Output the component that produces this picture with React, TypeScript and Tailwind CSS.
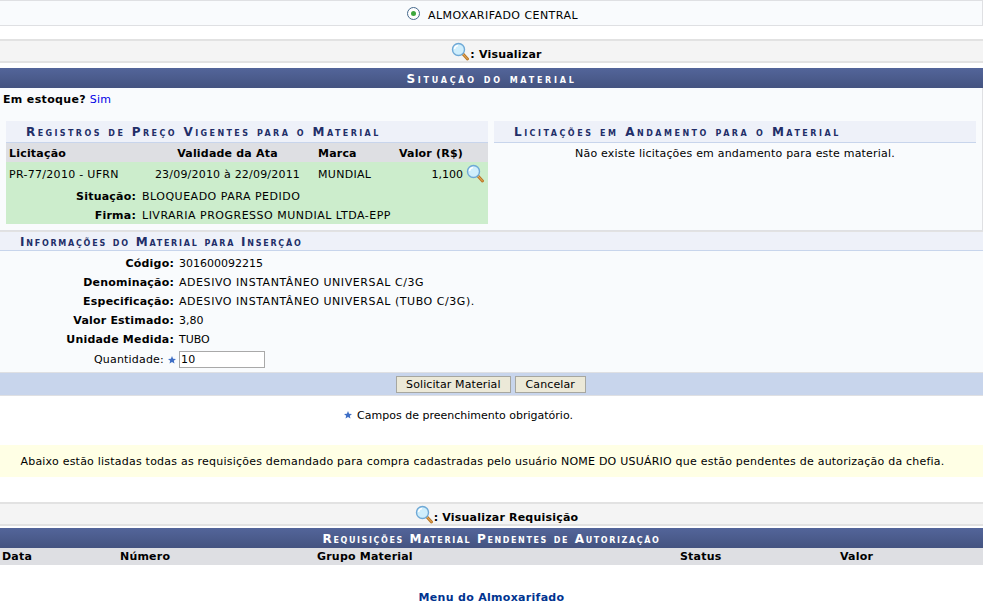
const Lens = ({ className = '' }: { className?: string }) => (
  <svg className={className} width="19" height="19" viewBox="0 0 19 19">
    <path d="M11.5 11.5l5 5.5" stroke="#b9772a" strokeWidth="3" strokeLinecap="round" />
    <path d="M11.5 11.5l5 5.5" stroke="#eeb25a" strokeWidth="1" strokeLinecap="round" />
    <circle cx="7.5" cy="7.5" r="6" fill="#cfeefc" stroke="#6fa9d6" strokeWidth="1.4" />
    <path d="M3.5 7a4 4 0 0 1 3.5-3.5" stroke="#fff" strokeWidth="1.5" fill="none" />
  </svg>
);

const Star = () => (
  <svg width="8" height="8" viewBox="0 0 10 10" className="inline-block">
    <path d="M5 0l1.4 3.3 3.6.3-2.7 2.3.8 3.6L5 7.6 1.9 9.5l.8-3.6L0 3.6l3.6-.3z" fill="#3f6fc6" />
  </svg>
);

const SectionTitle = ({ children, className = '' }: { children: string; className?: string }) => (
  <div className={`bg-[#475785] bg-gradient-to-b from-[#53659a] to-[#445380] h-5 pt-px flex items-center justify-center text-white font-bold text-[12px] [font-variant:small-caps] ${className}`}>
    {children}
  </div>
);

const SubTitle = ({ children, className = '' }: { children: string; className?: string }) => (
  <div className={`bg-[#eef1f9] border-b border-[#c8d5ec] text-[#222e68] font-bold text-[12px] [font-variant:small-caps] flex items-center ${className}`}>
    {children}
  </div>
);

const Caption = ({ children }: { children: React.ReactNode }) => (
  <div className="h-6 bg-[#f4f4f4] border-y-2 border-[#e2e2e2] flex items-end justify-center font-bold text-[11px] pl-[10px]">
    <Lens className="self-center" />
    <span className="leading-4 -mb-[2px]">{children}</span>
  </div>
);

const fields = [
  ['Código:', '301600092215', 'tracking-normal'],
  ['Denominação:', 'ADESIVO INSTANTÂNEO UNIVERSAL C/3G', 'tracking-[0.55px]'],
  ['Especificação:', 'ADESIVO INSTANTÂNEO UNIVERSAL (TUBO C/3G).', 'tracking-[0.55px]'],
  ['Valor Estimado:', '3,80', 'tracking-normal'],
  ['Unidade Medida:', 'TUBO', 'tracking-normal'],
];

export default function App() {
  return (
    <div className="w-[983px] h-[606px] bg-white text-black text-[11px] tracking-[0.2px] font-['DejaVu_Sans',Verdana,sans-serif] overflow-hidden">
      <div className="h-[26px] bg-[#f9fbfd] border-y border-r border-[#dfe0e3] flex items-center justify-center gap-2 pt-1 pl-[3px]">
        <span className="w-[13px] h-[13px] rounded-full border border-[#45698c] bg-white flex items-center justify-center mb-1">
          <span className="w-[5px] h-[5px] rounded-full bg-[#3ea83e]" />
        </span>
        <span className="tracking-[0.45px] pt-[2px]">ALMOXARIFADO CENTRAL</span>
      </div>

      <div className="mt-[13px]">
        <Caption>: Visualizar</Caption>
      </div>

      <div className="mt-[5px]">
        <SectionTitle className="tracking-[2.75px]">Situação do material</SectionTitle>
      </div>

      <div className="h-[143px] bg-[#f9fbfd] border-r border-b border-[#dfe0e3] px-[6px]">
        <div className="h-[33px] -ml-[3px] pt-[3px] leading-[18px]">
          <b className="tracking-[0.35px]">Em estoque?</b> <span className="text-[#0000e6]">Sim</span>
        </div>
        <div className="grid grid-cols-[482px_482px] gap-[6px]">
          <div>
            <SubTitle className="h-[22px] pl-5 tracking-[2.4px]">Registros de Preço Vigentes para o Material</SubTitle>
            <div className="h-[19px] bg-[#dedfe3] grid grid-cols-[141px_155px_86px_72px] items-center font-bold pl-[3px] pt-[3px]">
              <span>Licitação</span>
              <span className="text-center">Validade da Ata</span>
              <span className="pl-[13px]">Marca</span>
              <span className="text-right">Valor (R$)</span>
            </div>
            <div className="h-[62px] bg-[#ccedcc]">
              <div className="h-[23px] pt-[3px] grid grid-cols-[141px_155px_86px_72px_24px] items-center pl-[3px]">
                <span className="tracking-[0.3px]">PR-77/2010 - UFRN</span>
                <span className="text-center">23/09/2010 à 22/09/2011</span>
                <span className="pl-[13px] tracking-[0.3px]">MUNDIAL</span>
                <span className="text-right tracking-normal">1,100</span>
                <Lens className="ml-[3px] -mt-[4px]" />
              </div>
              <div className="grid grid-cols-[130px_1fr] gap-x-[6px] leading-[19px] pt-[2px]">
                <b className="text-right">Situação:</b>
                <span className="tracking-[0.5px]">BLOQUEADO PARA PEDIDO</span>
                <b className="text-right">Firma:</b>
                <span className="tracking-[0.5px]">LIVRARIA PROGRESSO MUNDIAL LTDA-EPP</span>
              </div>
            </div>
          </div>
          <div>
            <SubTitle className="h-[22px] pl-5 tracking-[2.5px]">Licitações em Andamento para o Material</SubTitle>
            <p className="text-center pt-[3px]">Não existe licitações em andamento para este material.</p>
          </div>
        </div>
      </div>

      <SubTitle className="h-5 pl-5 pt-px border-t border-t-[#e2e2e2] tracking-[1.75px]">Informações do Material para Inserção</SubTitle>

      <div className="h-[121px] bg-[#f9fbfd] pt-[3px]">
        <div className="grid grid-cols-[174px_1fr] gap-x-[5px] leading-[19px]">
          {fields.map(([label, value, spacing]) => (
            <div key={label} className="contents">
              <b className="text-right">{label}</b>
              <span className={spacing}>{value}</span>
            </div>
          ))}
          <div className="flex justify-end items-center gap-[4px] h-[21px] -mr-[2px]">
            <span>Quantidade:</span>
            <Star />
          </div>
          <input
            readOnly
            value="10"
            className="w-[86px] h-[17px] self-center border border-[#a9a9a9] bg-white px-[1px] text-[11px] outline-none"
          />
        </div>
      </div>

      <div className="h-[24px] bg-[#c8d5ec] border-y border-[#dfe0e3] flex items-center justify-center gap-[4px] pr-[1px] tracking-[0.1px]">
        <button className="h-[17px] px-[9px] bg-[#ece9d8] border border-[#a7a7a0] text-[11px]">Solicitar Material</button>
        <button className="h-[17px] px-[10px] bg-[#ece9d8] border border-[#a7a7a0] text-[11px]">Cancelar</button>
      </div>

      <div className="h-[49px] pt-[12px] flex items-start justify-center gap-[5px] pr-[66px] leading-4 tracking-normal">
        <span className="leading-[14px]"><Star /></span>
        <span>Campos de preenchimento obrigatório.</span>
      </div>

      <div className="h-[32px] pt-[2px] pr-[18px] bg-[#ffffe5] flex items-center justify-center tracking-[0.22px]">
        Abaixo estão listadas todas as requisições demandado para compra cadastradas pelo usuário NOME DO USUÁRIO que estão pendentes de autorização da chefia.
      </div>

      <div className="mt-[25px]">
        <Caption>: Visualizar Requisição</Caption>
      </div>

      <div className="mt-[2px]">
        <SectionTitle className="tracking-[1.6px]">Requisições Material Pendentes de Autorização</SectionTitle>
      </div>

      <div className="h-[17px] pt-px bg-[#dedfe3] grid grid-cols-[118px_197px_363px_160px_1fr] items-center font-bold pl-[2px]">
        <span>Data</span>
        <span>Número</span>
        <span>Grupo Material</span>
        <span>Status</span>
        <span>Valor</span>
      </div>

      <div className="mt-[25px] text-center font-bold text-[#003390] leading-4 tracking-[0.3px]">Menu do Almoxarifado</div>
    </div>
  );
}
